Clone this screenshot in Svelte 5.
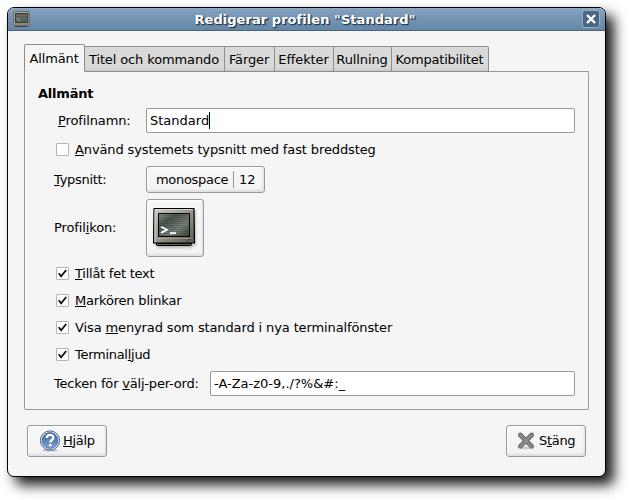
<script>
  const tabs = [
    { label: 'Allmänt', width: 61 },
    { label: 'Titel och kommando', width: 140 },
    { label: 'Färger', width: 50 },
    { label: 'Effekter', width: 59 },
    { label: 'Rullning', width: 58 },
    { label: 'Kompatibilitet', width: 97 }
  ];
  const options = [
    { before: '', key: 'T', after: 'illåt fet text', spacing: -0.25 },
    { before: '', key: 'M', after: 'arkören blinkar', spacing: -0.18 },
    { before: 'Visa ', key: 'm', after: 'enyrad som standard i nya terminalfönster', spacing: -0.12 },
    { before: 'Terminal', key: 'l', after: 'jud', spacing: -0.28 }
  ];
  const scanlines = Array.from({ length: 11 }, (_, i) => 9.5 + i * 2);
</script>

{#snippet terminal(size)}
  <svg width={size} height={size} viewBox="0 0 44 44">
    <defs>
      <linearGradient id="case" x1="0" y1="0" x2="1" y2="1">
        <stop offset="0" stop-color="#cfccc4" />
        <stop offset=".5" stop-color="#98948b" />
        <stop offset="1" stop-color="#595650" />
      </linearGradient>
      <linearGradient id="glass" x1="0" y1="0" x2="1" y2="1">
        <stop offset="0" stop-color="#8b958f" />
        <stop offset=".3" stop-color="#4b534f" />
        <stop offset=".65" stop-color="#78827c" />
        <stop offset="1" stop-color="#363e3a" />
      </linearGradient>
    </defs>
    <path d="M3.5 37.5h35v1.5l-1 .5h-33l-1-.5z" fill="#69665f" stroke="#000" />
    <path d="M1 2.5h40l.5 34.5H.5z" fill="url(#case)" stroke="#000" stroke-width="1.2" stroke-linejoin="round" />
    <path d="M2 36V3.5H40" fill="none" stroke="#deddd5" stroke-opacity=".8" />
    <path d="M2 32.5h38" stroke="#aaa79e" stroke-opacity=".6" />
    <rect x="5.5" y="7.5" width="31" height="23" fill="url(#glass)" stroke="#050505" />
    {#each scanlines as y}
      <path d="M6 {y}h30" stroke="#1c2621" stroke-opacity=".22" />
    {/each}
    <path d="m8 20.7 6 3.1-6 3.1M17 27.2h6" fill="none" stroke="#fff" stroke-width="1.8" />
    <path d="m34 35 1.5-1.5H38" fill="none" stroke="#403d37" />
  </svg>
{/snippet}

<main>
  <div class="window">
    <header>
      <span class="app-icon">
        <svg width="17" height="16" viewBox="0 0 17 16">
          <rect x=".5" y=".5" width="16" height="14" rx="1" fill="#8b8980" stroke="#6d6a63" />
          <path d="M1.5 13V1.5H15" fill="none" stroke="#aaa89f" />
          <path d="M2 15.5h13" stroke="#46443f" />
          <rect x="2.5" y="2.5" width="12" height="9" fill="#56605a" stroke="#383c39" />
          <path d="M3 4.5h11M3 7.5h11" stroke="#71827a" stroke-opacity=".5" />
          <path d="m4 7 1.5 1L4 9M6 9.5h2" fill="none" stroke="#a9afab" stroke-width=".8" />
        </svg>
      </span>
      <h1>Redigerar profilen "Standard"</h1>
      <button class="close" aria-label="Stäng fönster">
        <svg width="10" height="10" viewBox="0 0 10 10"><path d="m1 1 8 8m0-8-8 8" stroke="#fff" stroke-width="2.4" /></svg>
      </button>
    </header>

    <div class="content">
      <nav>
        {#each tabs as tab, i}
          <div class="tab" class:active={i === 0} style="width: {tab.width}px">{tab.label}</div>
        {/each}
      </nav>

      <section>
        <h2>Allmänt</h2>
        <div class="row name">
          <span class="label"><u>P</u>rofilnamn:</span>
          <div class="entry">Standard<i class="caret"></i></div>
        </div>
        <div class="check system"><span class="box"></span><span><u>A</u>nvänd systemets typsnitt med fast breddsteg</span></div>
        <div class="row font">
          <span class="label type"><u>T</u>ypsnitt:</span>
          <div class="button font-button"><span class="family">monospace</span><i></i><span>12</span></div>
        </div>
        <div class="row icon">
          <span class="label">Profil<u>i</u>kon:</span>
          <div class="button icon-button">{@render terminal(44)}</div>
        </div>
        <div class="options">
          {#each options as option}
            <div class="check">
              <span class="box">
                <svg width="11" height="11" viewBox="0 0 11 11"><path d="m1.7 5.2 2.4 3.2L9.2 2" fill="none" stroke="#111" stroke-width="1.8" /></svg>
              </span>
              <span style="letter-spacing: {option.spacing}px">{option.before}<u>{option.key}</u>{option.after}</span>
            </div>
          {/each}
        </div>
        <div class="row words">
          <span class="label">Tecken för <u>v</u>älj-per-ord:</span>
          <div class="entry">-A-Za-z0-9,./?%&amp;#:_</div>
        </div>
      </section>

      <footer>
        <div class="button action help">
          <svg width="22" height="22" viewBox="0 0 22 22">
            <defs>
              <linearGradient id="help" x1="0" y1="0" x2="0" y2="1">
                <stop offset="0" stop-color="#386096" />
                <stop offset="1" stop-color="#81a3cf" />
              </linearGradient>
            </defs>
            <ellipse cx="11" cy="20.3" rx="8" ry="1.2" fill="#bbb" />
            <circle cx="11" cy="10.5" r="9.6" fill="#e9f0f8" stroke="#3b6096" />
            <circle cx="11" cy="10.5" r="7.9" fill="url(#help)" stroke="#416ba3" stroke-width=".8" />
            <path d="M7.8 8c0-4.2 6.5-4 6.5-.5 0 2.5-3 2.4-3 5" fill="none" stroke="#fff" stroke-width="2.4" />
            <rect x="9.9" y="14" width="2.7" height="2.3" fill="#fff" />
          </svg>
          <span><u>H</u>jälp</span>
        </div>
        <div class="button action">
          <svg width="22" height="22" viewBox="0 0 22 22">
            <ellipse cx="11" cy="18" rx="6" ry="1.5" fill="#ccc" />
            <path d="m5.3 5 11.4 11.4m0-11.4L5.3 16.4" stroke="#626560" stroke-width="4.6" stroke-linecap="round" />
            <path d="m5.3 5 11.4 11.4m0-11.4L5.3 16.4" stroke="#878a85" stroke-width="2.8" stroke-linecap="round" />
          </svg>
          <span>S<u>t</u>äng</span>
        </div>
      </footer>
    </div>
  </div>
</main>

<style>
  :global(body) { margin: 0; background: #fff; }
  main {
    box-sizing: border-box;
    width: 629px;
    height: 500px;
    padding: 7px;
    overflow: hidden;
    font: 13px/16px "DejaVu Sans", sans-serif;
    letter-spacing: -.12px;
    color: #000;
    white-space: nowrap;
  }
  main * { box-sizing: border-box; }
  svg { display: block; flex: none; }
  u { text-decoration: underline 1px; text-underline-offset: 1px; text-decoration-skip-ink: none; }
  .window {
    width: 599px;
    height: 470px;
    border: 1px solid #000;
    border-radius: 7px;
    background: #f5f5f5;
    box-shadow: 8px 8px 13px rgba(0, 0, 0, .9);
  }
  header {
    display: flex;
    align-items: center;
    height: 23px;
    padding: 0 5px 0 5px;
    border-bottom: 1px solid #4b647c;
    border-radius: 6px 6px 0 0;
    background: linear-gradient(#98b2ce 0, #84a1c0 1px, #6487a8);
  }
  .app-icon { width: 17px; }
  h1 {
    flex: 1;
    margin: 0;
    padding: 1px 2px 0 0;
    font-size: 13px;
    line-height: 22px;
    letter-spacing: .05px;
    text-align: center;
    color: #fff;
    text-shadow: 1px 1px 1px #26384e, 1px 1px 1px #26384e;
  }
  .close {
    display: flex;
    align-items: center;
    justify-content: center;
    width: 18px;
    height: 18px;
    padding: 0;
    border: 1px solid #95afc8;
    border-radius: 3px;
    background: #4d667e;
  }
  .content { padding: 13px 16px 0; }
  nav { display: flex; align-items: flex-end; height: 28px; }
  nav::after { content: ""; flex: 1; height: 1px; background: #999; }
  .tab {
    height: 26px;
    padding: 5px 1px 0 0;
    border: 1px solid #8d8d8d;
    border-left: 0;
    background: linear-gradient(#d9d9d9 85%, #c8c8c8);
    text-align: center;
  }
  .tab:last-child { border-radius: 0 2px 0 0; letter-spacing: -.2px; }
  .active {
    height: 28px;
    padding-top: 6px;
    border-left: 1px solid #8d8d8d;
    border-bottom-color: #f5f5f5;
    border-radius: 2px 2px 0 0;
    background: #f5f5f5;
  }
  section {
    height: 338px;
    padding: 14px 13px 0;
    border: 1px solid #999;
    border-top: 0;
    border-radius: 0 2px 2px 2px;
  }
  h2 { margin: 0; font-size: 13px; line-height: 16px; letter-spacing: -.2px; }
  .row { display: flex; align-items: center; padding-left: 16px; }
  .label { width: 92px; }
  .type { letter-spacing: -.3px; }
  .entry {
    display: flex;
    align-items: center;
    flex: 1;
    height: 25px;
    padding-left: 3px;
    border: 1px solid #999;
    border-radius: 2px;
    background: #fff;
    letter-spacing: 0;
  }
  .caret { width: 1px; height: 17px; background: #000; }
  .name { margin-top: 6px; }
  .name .label { padding-left: 4px; }
  .check { display: flex; align-items: center; height: 27px; padding-left: 18px; gap: 6px; }
  .system { height: 33px; }
  .box {
    display: flex;
    align-items: center;
    justify-content: center;
    width: 13px;
    height: 13px;
    border: 1px solid #b5b5b5;
    border-radius: 1px;
    background: #fff;
  }
  .button {
    display: flex;
    align-items: center;
    border: 1px solid #999;
    border-radius: 3px;
    background: linear-gradient(#f7f7f7, #f3f3f3);
    box-shadow: inset 1px 1px #fff, inset -1px -2px 2px #dfdfdf;
  }
  .font-button { width: 119px; height: 27px; padding-left: 9px; }
  .family { width: 72px; letter-spacing: -.3px; }
  .font-button i { width: 1px; height: 17px; margin: 0 5px; background: #999; }
  .icon { margin-top: 6px; }
  .icon-button { width: 58px; height: 58px; justify-content: center; }
  .icon-button svg { filter: drop-shadow(1px 2px 1px #bbb); }
  .options { margin-top: 3px; }
  .words { margin-top: 3px; }
  .words .label { width: 156px; letter-spacing: -.19px; }
  footer { display: flex; justify-content: space-between; padding: 15px 3px 0; }
  .action { width: 80px; height: 32px; padding-left: 8px; gap: 2px; }
  .action span { letter-spacing: -.3px; }
  .help { padding-left: 11px; }
</style>
